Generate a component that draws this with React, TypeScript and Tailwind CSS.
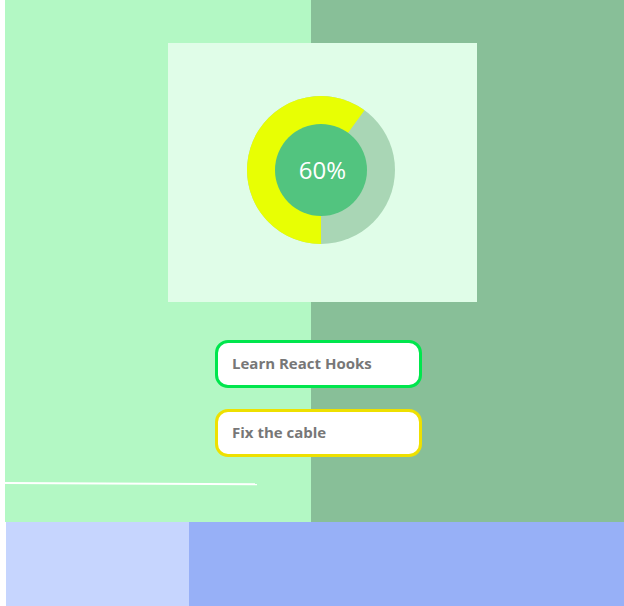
import React from "react";

function Donut() {
  const cx = 75, cy = 75, r = 74;
  const pct = 0.6;
  const start = Math.PI; // bottom, measured clockwise from top
  const end = start + pct * 2 * Math.PI;
  const pt = (a: number) => [cx + r * Math.sin(a), cy - r * Math.cos(a)];
  const [x1, y1] = pt(start);
  const [x2, y2] = pt(end);
  const d = `M ${cx} ${cy} L ${x1} ${y1} A ${r} ${r} 0 1 1 ${x2} ${y2} Z`;
  return (
    <div className="relative w-[150px] h-[150px]">
      <svg width="150" height="150" viewBox="0 0 150 150" className="absolute inset-0">
        <circle cx={cx} cy={cy} r={r} fill="#a9d6b5" />
        <path d={d} fill="#e8ff03" />
        <circle cx={cx} cy={cy} r={46} fill="#52c47f" />
      </svg>
      <div className="absolute inset-0 flex items-center justify-center pl-[3px]">
        <span className="text-white text-[24px] font-medium" style={{ fontFamily: '"Open Sans", sans-serif' }}>60%</span>
      </div>
    </div>
  );
}

function Task({ label, border }: { label: string; border: string }) {
  return (
    <div className={`w-[207px] h-[48px] bg-white border-[3px] rounded-[13px] flex items-center pl-[14px] ${border}`}>
      <span className="text-[15px] font-bold text-[#777777] pb-[1px]" style={{ fontFamily: '"Open Sans", sans-serif' }}>{label}</span>
    </div>
  );
}

export default function App() {
  return (
    <div className="w-[624px] h-[606px] overflow-hidden bg-white pl-[5px] flex flex-col">
      <div className="h-[522px] flex flex-col bg-[linear-gradient(to_right,#b3f8c4_306px,#88bf98_306px)]">
        <div className="ml-[163px] mt-[43px] w-[309px] h-[259px] bg-[#e0fde8] pl-[78px] pt-[52px]">
          <Donut />
        </div>
        <div className="ml-[210px] mt-[38px] flex flex-col gap-[21px]">
          <Task label="Learn React Hooks" border="border-[#00e64d]" />
          <Task label="Fix the cable" border="border-[#eee000]" />
        </div>
        <div className="mt-[25px] w-[252px] h-[2px] bg-white origin-left rotate-[0.3deg]" />
      </div>
      <div className="ml-[1px] h-[84px] flex">
        <div className="w-[183px] bg-[#c6d5fe]" />
        <div className="flex-1 bg-[#97b0f7]" />
      </div>
    </div>
  );
}
